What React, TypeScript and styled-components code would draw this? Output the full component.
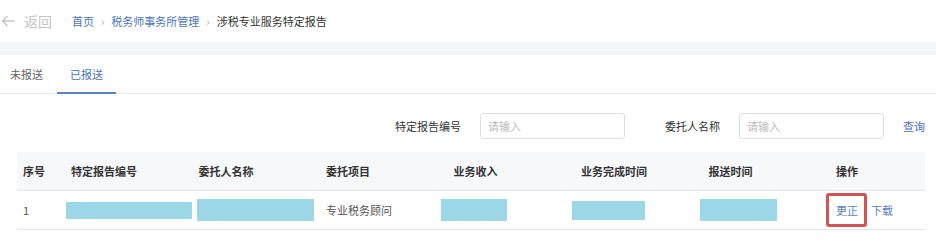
import styled, { createGlobalStyle } from "styled-components"

const GlobalStyle = createGlobalStyle`
  body {
    margin: 0;
    background: #fff;
    font-family: "Noto Sans CJK SC", "Noto Sans", sans-serif;
    color: #333;
  }
`

const TopBar = styled.header`
  height: 42px;
  display: flex;
  align-items: center;
  padding-left: 1px;
`

const Back = styled.a`
  display: flex;
  align-items: center;
  gap: 9px;
  font-size: 14px;
  color: #c4c4c4;
  cursor: pointer;
`

const Crumbs = styled.nav`
  display: flex;
  align-items: center;
  margin-left: 20px;
  font-size: 11px;
`

const Crumb = styled.span<{ $current?: boolean }>`
  color: ${(p) => (p.$current ? "#333" : "#4a72c4")};
`

const Sep = styled.span`
  color: #aaa;
  padding: 0 7px;
`

const Band = styled.div`
  height: 13px;
  background: #f5f6f8;
`

const Tabs = styled.div`
  display: flex;
  height: 38px;
  border-bottom: 1px solid #eaecef;
`

const Tab = styled.div<{ $active?: boolean }>`
  display: flex;
  align-items: center;
  padding: 0 13px;
  font-size: 11px;
  color: ${(p) => (p.$active ? "#4a72c4" : "#666")};
  border-bottom: 2px solid ${(p) => (p.$active ? "#5b80c8" : "transparent")};
  margin-bottom: -1px;

  &:first-child {
    padding-left: 10px;
    margin-right: 1px;
  }
`

const Filters = styled.div`
  display: flex;
  justify-content: flex-end;
  align-items: center;
  gap: 40px;
  margin-top: 19px;
  padding-right: 11px;
`

const Field = styled.label`
  display: flex;
  align-items: center;
  gap: 19px;
  font-size: 11px;
  color: #333;
`

const Input = styled.input`
  box-sizing: border-box;
  width: 145px;
  height: 26px;
  border: 1px solid #dcdfe6;
  border-radius: 3px;
  padding: 0 7px;
  font-family: inherit;
  font-size: 11px;
  outline: none;

  &::placeholder {
    color: #bbb;
  }
`

const Search = styled.a`
  font-size: 11px;
  color: #4a72c4;
  margin-left: -21px;
  cursor: pointer;
`

const Table = styled.table`
  margin: 13px 11px 0 17px;
  width: 908px;
  border-collapse: collapse;
  table-layout: fixed;
  font-size: 11px;
`

const Th = styled.th`
  height: 38px;
  padding: 0 6px;
  text-align: left;
  font-weight: bold;
  color: #333;
  background: #f7f8fa;
  border-bottom: 1px solid #e4e6ea;
`

const Td = styled.td`
  height: 38px;
  padding: 0 6px;
  color: #555;
  border-bottom: 1px solid #e4e6ea;
  white-space: nowrap;
`

const MaskCell = styled.td`
  height: 38px;
  padding: 0;
  border-bottom: 1px solid #e4e6ea;
`

const Mask = styled.div<{ $w: number; $h: number; $dx: number }>`
  width: ${(p) => p.$w}px;
  height: ${(p) => p.$h}px;
  margin-left: ${(p) => p.$dx}px;
  background: #9bd7e7;
`

const Action = styled.a<{ $marked?: boolean }>`
  position: relative;
  display: inline-block;
  color: #5a7fd0;
  margin-right: 13px;
  cursor: pointer;

  ${(p) =>
    p.$marked &&
    `
    &::after {
      content: "";
      position: absolute;
      left: -10px;
      right: -9px;
      top: -9px;
      bottom: -9px;
      border: 3px solid #d65353;
      border-radius: 3px;
    }
  `}
`

const columns = [
  "序号",
  "特定报告编号",
  "委托人名称",
  "委托项目",
  "业务收入",
  "业务完成时间",
  "报送时间",
  "操作",
]

export default function App() {
  return (
    <>
      <GlobalStyle />
      <TopBar>
        <Back>
          <svg width="14" height="12" viewBox="0 0 14 12" fill="none">
            <path
              d="M13.5 6H1.5M6.5 1L1.5 6l5 5"
              stroke="#c4c4c4"
              strokeWidth="1.4"
            />
          </svg>
          返回
        </Back>
        <Crumbs>
          <Crumb>首页</Crumb>
          <Sep>›</Sep>
          <Crumb>税务师事务所管理</Crumb>
          <Sep>›</Sep>
          <Crumb $current>涉税专业服务特定报告</Crumb>
        </Crumbs>
      </TopBar>
      <Band />
      <Tabs>
        <Tab>未报送</Tab>
        <Tab $active>已报送</Tab>
      </Tabs>
      <Filters>
        <Field>
          特定报告编号
          <Input placeholder="请输入" />
        </Field>
        <Field>
          委托人名称
          <Input placeholder="请输入" />
        </Field>
        <Search>查询</Search>
      </Filters>
      <Table>
        <colgroup>
          <col style={{ width: 48 }} />
          <col style={{ width: 127.5 }} />
          <col style={{ width: 127.5 }} />
          <col style={{ width: 127.5 }} />
          <col style={{ width: 127.5 }} />
          <col style={{ width: 127.5 }} />
          <col style={{ width: 127.5 }} />
          <col style={{ width: 95 }} />
        </colgroup>
        <thead>
          <tr>
            {columns.map((c) => (
              <Th key={c}>{c}</Th>
            ))}
          </tr>
        </thead>
        <tbody>
          <tr>
            <Td>1</Td>
            <MaskCell>
              <Mask $w={126} $h={17} $dx={1} />
            </MaskCell>
            <MaskCell>
              <Mask $w={117} $h={22} $dx={4} />
            </MaskCell>
            <Td>专业税务顾问</Td>
            <MaskCell>
              <Mask $w={66} $h={22} $dx={-7} />
            </MaskCell>
            <MaskCell>
              <Mask $w={73} $h={19} $dx={-3} />
            </MaskCell>
            <MaskCell>
              <Mask $w={77} $h={22} $dx={-3} />
            </MaskCell>
            <Td>
              <Action $marked>更正</Action>
              <Action>下载</Action>
            </Td>
          </tr>
        </tbody>
      </Table>
    </>
  )
}
